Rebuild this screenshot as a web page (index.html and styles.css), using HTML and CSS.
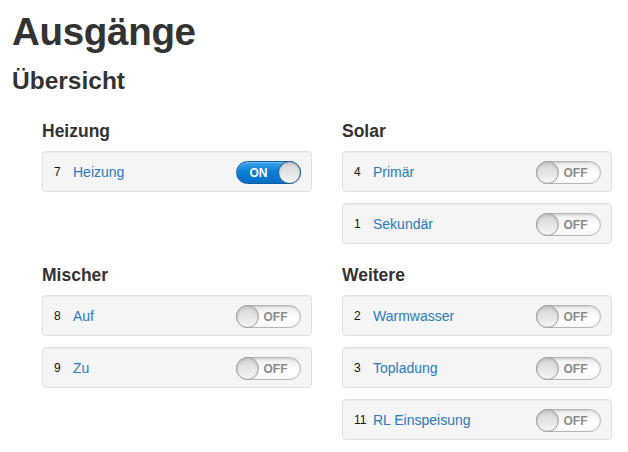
FILE: index.html
```html
<!DOCTYPE html>
<html lang="de">
<head>
<meta charset="utf-8">
<title>Ausgänge</title>
<link rel="stylesheet" href="styles.css">
</head>
<body>
<div class="page">
  <h1 class="title">Ausgänge</h1>
  <h2 class="subtitle">Übersicht</h2>
  <div class="groups">
    <section class="group">
      <h4 class="group-title">Heizung</h4>
      <div class="card"><span class="num">7</span><a class="label">Heizung</a><span class="switch on"><span class="switch-text">ON</span><span class="knob"></span></span></div>
    </section>
    <section class="group">
      <h4 class="group-title">Solar</h4>
      <div class="card"><span class="num">4</span><a class="label">Primär</a><span class="switch off"><span class="knob"></span><span class="switch-text">OFF</span></span></div>
      <div class="card"><span class="num">1</span><a class="label">Sekundär</a><span class="switch off"><span class="knob"></span><span class="switch-text">OFF</span></span></div>
    </section>
    <section class="group">
      <h4 class="group-title">Mischer</h4>
      <div class="card"><span class="num">8</span><a class="label">Auf</a><span class="switch off"><span class="knob"></span><span class="switch-text">OFF</span></span></div>
      <div class="card"><span class="num">9</span><a class="label">Zu</a><span class="switch off"><span class="knob"></span><span class="switch-text">OFF</span></span></div>
    </section>
    <section class="group">
      <h4 class="group-title">Weitere</h4>
      <div class="card"><span class="num">2</span><a class="label">Warmwasser</a><span class="switch off"><span class="knob"></span><span class="switch-text">OFF</span></span></div>
      <div class="card"><span class="num">3</span><a class="label">Topladung</a><span class="switch off"><span class="knob"></span><span class="switch-text">OFF</span></span></div>
      <div class="card"><span class="num">11</span><a class="label">RL Einspeisung</a><span class="switch off"><span class="knob"></span><span class="switch-text">OFF</span></span></div>
    </section>
  </div>
</div>
</body>
</html>
```
FILE: styles.css
```css
html, body {
  margin: 0;
  padding: 0;
  background: #fff;
}
body {
  font-family: "Liberation Sans", Arial, Helvetica, sans-serif;
  color: #333;
  font-size: 14px;
  line-height: 20px;
}
.page {
  padding: 0 12px;
}
.title {
  font-size: 38.5px;
  line-height: 40px;
  font-weight: bold;
  margin: 12px 0 0;
  color: #333;
  letter-spacing: -0.3px;
}
.subtitle {
  font-size: 24.5px;
  line-height: 30px;
  font-weight: bold;
  margin: 14px 0 0;
  color: #333;
}
.groups {
  display: grid;
  grid-template-columns: 270px 270px;
  column-gap: 30px;
  row-gap: 21px;
  padding-left: 30px;
  margin-top: 25px;
  align-items: start;
}
.group {
  display: flex;
  flex-direction: column;
  gap: 11px;
}
.group-title {
  font-size: 17.5px;
  line-height: 20px;
  font-weight: bold;
  margin: 0 0 -1px;
  color: #333;
}
.card {
  box-sizing: border-box;
  height: 41px;
  display: flex;
  align-items: center;
  padding: 0 10px 0 11px;
  background: #f5f5f5;
  border: 1px solid #e0e0e0;
  border-radius: 4px;
  box-shadow: inset 0 1px 1px rgba(0,0,0,0.04);
}
.num {
  width: 19px;
  font-size: 12px;
  color: #111;
}
.label {
  flex: 1;
  font-size: 14px;
  color: #2a7bbf;
  text-decoration: none;
}
.switch {
  box-sizing: border-box;
  width: 65px;
  height: 23px;
  border-radius: 12px;
  display: flex;
  align-items: center;
  margin-top: 2px;
  font-size: 12px;
  font-weight: bold;
  line-height: 1;
}
.switch-text {
  flex: 1;
  text-align: center;
}
.switch.on {
  background: linear-gradient(to bottom, #3ea3ea 0%, #0b7fd6 45%, #0a6fc4 100%);
  border: 1px solid #0d5ca3;
  color: #fff;
  box-shadow: inset 0 1px 1px rgba(255,255,255,0.3);
}
.switch.on .switch-text {
  padding-left: 2px;
}
.switch.off {
  background: linear-gradient(to bottom, #ececec 0%, #ffffff 60%, #f7f7f7 100%);
  border: 1px solid #b5b5b5;
  color: #8a8a8a;
  box-shadow: inset 0 1px 2px rgba(0,0,0,0.15);
}
.switch.off .switch-text {
  padding-right: 8px;
}
.knob {
  box-sizing: border-box;
  width: 23px;
  height: 23px;
  border-radius: 50%;
  flex: none;
  background: linear-gradient(to bottom, #d9d9d9 0%, #e4e4e4 50%, #f6f6f6 100%);
  box-shadow: inset 0 2px 3px rgba(0,0,0,0.12);
}
.switch.on .knob {
  margin-right: -1px;
  border: 1.5px solid #1b5d98;
}
.switch.off .knob {
  margin-left: -1px;
  border: 1.5px solid #9a9a9a;
}
```
